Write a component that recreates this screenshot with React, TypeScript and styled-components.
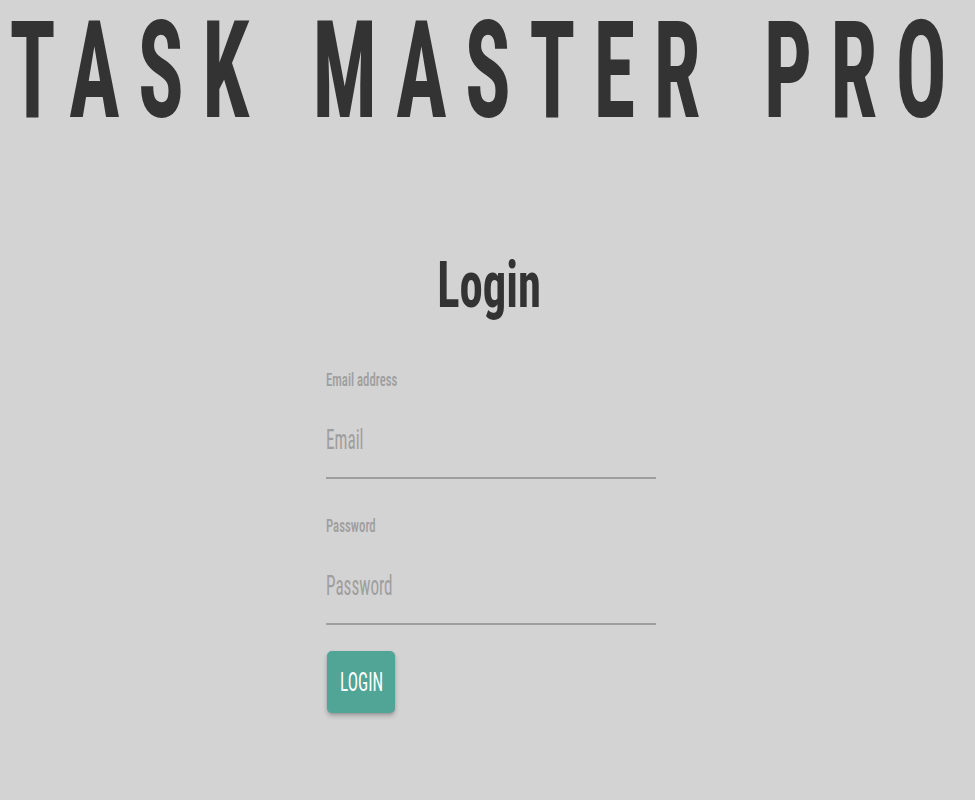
import React from "react";
import styled, { createGlobalStyle } from "styled-components";

const GlobalStyle = createGlobalStyle`
  html, body {
    margin: 0;
    padding: 0;
    background: #d3d3d3;
  }
  body {
    font-family: Roboto, "Liberation Sans", sans-serif;
    font-stretch: 75%;
    color: #333;
  }
  * { box-sizing: border-box; }
`;

const Page = styled.main`
  width: 975px;
  min-height: 800px;
  overflow: hidden;
`;

const TitleBar = styled.header`
  height: 139px;
  padding-top: 4px;
  display: flex;
  justify-content: center;
`;

const Title = styled.h1`
  flex: none;
  margin: 0;
  font-size: 135px;
  line-height: 135px;
  font-weight: 700;
  font-stretch: 75%;
  letter-spacing: 29px;
  word-spacing: 11px;
  white-space: nowrap;
  color: #333;
  transform: scaleX(0.63);
  transform-origin: center;
`;

const HeadingRow = styled.div`
  margin-top: 115px;
  padding-left: 4px;
  display: flex;
  justify-content: center;
`;

const Heading = styled.h2`
  margin: 0;
  font-size: 64px;
  line-height: 64px;
  font-weight: 700;
  color: #333;
  transform: scaleX(0.73);
  transform-origin: center;
`;

const Form = styled.form`
  width: 330px;
  margin-left: calc(50% - 162px);
  margin-top: 53px;
  display: flex;
  flex-direction: column;
  align-items: flex-start;
`;

const Field = styled.div<{ $gap: number }>`
  width: 100%;
  margin-top: ${(p) => p.$gap}px;
  display: flex;
  flex-direction: column;
`;

const Label = styled.label`
  display: block;
  height: 18px;
  font-size: 18px;
  line-height: 18px;
  font-weight: 500;
  color: #9e9e9e;
  white-space: nowrap;
  transform: scaleX(0.71);
  transform-origin: left center;
`;

const InputBox = styled.div`
  margin-top: 14px;
  width: 100%;
  height: 76px;
  border-bottom: 2px solid #9e9e9e;
`;

const Input = styled.input`
  display: block;
  width: calc(100% / 0.635);
  height: 74px;
  margin: 0;
  padding: 0;
  border: none;
  outline: none;
  background: transparent;
  font-family: Roboto, "Liberation Sans", sans-serif;
  font-stretch: 75%;
  font-size: 27px;
  color: #333;
  transform: scaleX(0.635);
  transform-origin: left center;
  &::placeholder {
    color: #9e9e9e;
  }
`;

const Button = styled.button`
  margin-top: 26px;
  margin-left: 1px;
  width: 68px;
  height: 62px;
  padding: 0 0 0 3px;
  border: none;
  border-radius: 5px;
  background: #50a597;
  box-shadow: 0 3px 5px rgba(0, 0, 0, 0.22), 0 1px 2px rgba(0, 0, 0, 0.12);
  display: flex;
  align-items: center;
  justify-content: center;
  cursor: pointer;
`;

const ButtonText = styled.span`
  display: inline-block;
  font-family: Roboto, "Liberation Sans", sans-serif;
  font-stretch: 75%;
  font-size: 26px;
  line-height: 26px;
  font-weight: 400;
  color: #fff;
  transform: scaleX(0.66);
`;

export default function App() {
  return (
    <Page>
      <GlobalStyle />
      <TitleBar>
        <Title>TASK MASTER PRO</Title>
      </TitleBar>
      <HeadingRow>
        <Heading>Login</Heading>
      </HeadingRow>
      <Form onSubmit={(e) => e.preventDefault()}>
        <Field $gap={0}>
          <Label htmlFor="email">Email address</Label>
          <InputBox>
            <Input id="email" type="email" placeholder="Email" />
          </InputBox>
        </Field>
        <Field $gap={38}>
          <Label htmlFor="password">Password</Label>
          <InputBox>
            <Input id="password" type="password" placeholder="Password" />
          </InputBox>
        </Field>
        <Button type="submit">
          <ButtonText>LOGIN</ButtonText>
        </Button>
      </Form>
    </Page>
  );
}
